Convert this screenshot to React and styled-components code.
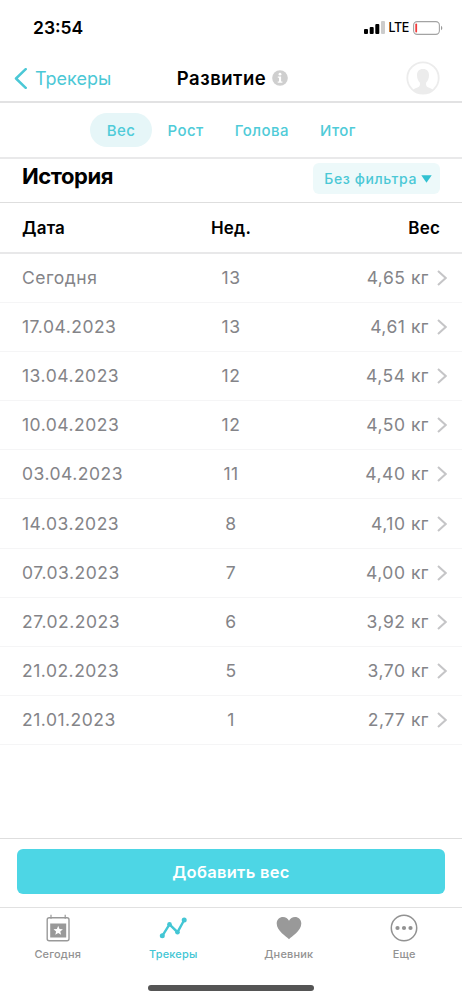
import styled, { createGlobalStyle } from 'styled-components';

const GlobalStyle = createGlobalStyle`
  * {
    box-sizing: border-box;
  }

  body {
    margin: 0;
    background: #fff;
    font-family: Inter, 'Liberation Sans', sans-serif;
  }

  button {
    font-family: inherit;
    border: none;
    background: none;
    padding: 0;
    cursor: pointer;
  }
`;

const Screen = styled.div`
  display: flex;
  flex-direction: column;
  width: 462px;
  height: 1000px;
  overflow: hidden;
  background: #fff;
`;

const StatusBar = styled.div`
  display: flex;
  align-items: center;
  justify-content: space-between;
  height: 54px;
  padding: 1px 19px 0 33px;
`;

const Clock = styled.span`
  font-size: 17.5px;
  font-weight: 600;
`;

const StatusIcons = styled.div`
  display: flex;
  align-items: center;
  gap: 4px;
`;

const Network = styled.span`
  font-size: 12.5px;
  font-weight: 500;
  letter-spacing: -0.4px;
`;

const NavBar = styled.header`
  display: grid;
  grid-template-columns: 1fr auto 1fr;
  align-items: center;
  height: 49px;
  padding: 1px 22px 0 14px;
  border-bottom: 2px solid #e2e2e3;
`;

const BackButton = styled.button`
  display: flex;
  align-items: center;
  gap: 8px;
  color: #4bc8d6;
  font-size: 18px;
  letter-spacing: 0;
`;

const Title = styled.h1`
  display: flex;
  align-items: center;
  gap: 6px;
  margin: 0;
  padding-left: 11px;
  font-size: 18.5px;
  font-weight: 600;
  letter-spacing: 0.5px;
`;

const Avatar = styled.div`
  justify-self: end;
  height: 34px;
`;

const Tabs = styled.nav`
  display: flex;
  align-items: center;
  height: 56px;
  padding-left: 90px;
  border-bottom: 2px solid #e9e9ea;
`;

const Tab = styled.button`
  min-width: 62px;
  height: 34px;
  padding: 0 15.5px;
  border-radius: 17px;
  background: ${({ $active }) => ($active ? '#e6f6f8' : 'transparent')};
  color: #4fcbd8;
  font-size: 15px;
  font-weight: 500;
  letter-spacing: 0.45px;
`;

const HistoryBar = styled.section`
  display: flex;
  justify-content: space-between;
  height: 44px;
  padding: 4px 22px 0;
  border-bottom: 1px solid #dedede;
`;

const Heading = styled.h2`
  margin: 0;
  font-size: 22px;
  line-height: 27px;
  font-weight: 700;
  letter-spacing: -0.45px;
`;

const FilterButton = styled.button`
  display: flex;
  align-items: center;
  gap: 4px;
  height: 31px;
  padding: 0 8px 0 11px;
  border-radius: 6px;
  background: #edf9fa;
  color: #4bc8d6;
  font-size: 14px;
  font-weight: 500;
  letter-spacing: 0.6px;
`;

const Row = styled.div`
  display: grid;
  grid-template-columns: 179px 60px 1fr;
  align-items: center;
  height: 49.1px;
  padding: 0 15px 1px 22px;
  border-bottom: 1px solid #f5f5f6;
  color: #848488;
  font-size: 17.5px;
  letter-spacing: 0.5px;
`;

const HeadRow = styled(Row)`
  height: 51px;
  padding-right: 22px;
  padding-bottom: 0;
  border-bottom: 2px solid #e8e8e9;
  color: #000;
  font-size: 17px;
  font-weight: 600;
  letter-spacing: 0.2px;
`;

const Week = styled.span`
  text-align: center;
`;

const Weight = styled.span`
  display: flex;
  align-items: center;
  justify-content: flex-end;
  gap: 8px;

  svg {
    margin-top: 1px;
  }
`;

const Footer = styled.footer`
  margin-top: auto;
  height: 162px;
  border-top: 1px solid #dedede;
`;

const AddArea = styled.div`
  height: 69px;
  padding: 10px 17px 0;
  border-bottom: 1px solid #e1e1e1;
`;

const AddButton = styled.button`
  width: 100%;
  height: 45px;
  border-radius: 6px;
  background: #4dd6e5;
  color: #fff;
  font-size: 16.5px;
  font-weight: 600;
  letter-spacing: 0.3px;
`;

const BottomNav = styled.nav`
  display: grid;
  grid-template-columns: repeat(4, 1fr);
  height: 78px;
  padding-top: 6px;
`;

const BottomItem = styled.button`
  display: flex;
  flex-direction: column;
  align-items: center;
  gap: 5px;
  height: 50px;
  color: ${({ $active }) => ($active ? '#43c6d4' : '#929292')};
  font-size: 11px;
  font-weight: 500;
  letter-spacing: 0.15px;
`;

const HomeIndicator = styled.div`
  width: 166px;
  height: 6px;
  margin: -1px auto 0;
  border-radius: 3px;
  background: #555;
`;

const SignalIcon = () => (
  <svg width="21" height="13" viewBox="0 0 21 13">
    <rect x="0" y="8" width="4" height="5" rx="1" fill="#000" />
    <rect x="5.7" y="6" width="4" height="7" rx="1" fill="#000" />
    <rect x="11.3" y="3" width="4" height="10" rx="1" fill="#000" />
    <rect x="17" y="0" width="4" height="13" rx="1" fill="#ccc" />
  </svg>
);

const BatteryIcon = () => (
  <svg width="30" height="14" viewBox="0 0 30 14">
    <rect x="0.6" y="0.6" width="25.8" height="12.8" rx="3.6" fill="none" stroke="#a3a3a3" strokeWidth="1.1" />
    <rect x="2.3" y="2.5" width="1.8" height="9" rx="0.9" fill="#f23b3b" />
    <path d="M28 4.8c1.8.8 1.8 3.6 0 4.4z" fill="#999" />
  </svg>
);

const BackIcon = () => (
  <svg width="13" height="21" viewBox="0 0 13 21" fill="none" stroke="currentColor" strokeWidth="2.5">
    <path d="M11.7 1.2 2 10.5l9.7 9.3" strokeLinecap="round" strokeLinejoin="round" />
  </svg>
);

const InfoIcon = () => (
  <svg width="16" height="16" viewBox="0 0 16 16">
    <circle cx="8" cy="8" r="7.8" fill="#cfcfcf" />
    <circle cx="8" cy="4.2" r="1.4" fill="#fff" />
    <path d="M5.8 6.5h3.3v5h1.3v1.2H5.7v-1.2H7V7.7H5.8z" fill="#fff" />
  </svg>
);

const AvatarIcon = () => (
  <svg width="34" height="34" viewBox="0 0 34 34">
    <circle cx="17" cy="17" r="15.7" fill="#fff" stroke="#ececec" strokeWidth="1.8" />
    <path
      d="M17 8c-4.2 0-6 2.7-6 6.2 0 3.2 1.2 5.8 2.8 7.3.5 2.6.1 4-2.3 5.1-1.7.8-3.5 1.2-4.6 2.4A15.5 15.5 0 0 0 17 32.6 15.5 15.5 0 0 0 27.1 29c-1.1-1.2-2.9-1.6-4.6-2.4-2.4-1.1-2.8-2.5-2.3-5.1 1.6-1.5 2.8-4.1 2.8-7.3C23 10.7 21.2 8 17 8z"
      fill="#ececec"
    />
  </svg>
);

const CaretIcon = () => (
  <svg width="11" height="8" viewBox="0 0 11 8">
    <path d="M.3.3h10.4L5.5 7.7z" fill="#31c1d1" />
  </svg>
);

const ChevronIcon = () => (
  <svg width="10" height="16" viewBox="0 0 10 16" fill="none" stroke="#c5c5c7" strokeWidth="2">
    <path d="M1 1l7.7 7L1 15" />
  </svg>
);

const CalendarIcon = () => (
  <svg width="28" height="28" viewBox="0 0 28 28">
    <path d="M7 .8v4M21.2.8v4" stroke="#999" strokeWidth="1.2" />
    <rect x="3.2" y="3.7" width="21.8" height="23" rx="2" fill="none" stroke="#999" strokeWidth="1.4" />
    <rect x="6.2" y="9.5" width="16" height="14" fill="#999" />
    <path d="M14.2 11.8l1.3 3.2 3.4.2-2.6 2.2.8 3.3-2.9-1.8-2.9 1.8.8-3.3-2.6-2.2 3.4-.2z" fill="#fff" />
  </svg>
);

const TrackersIcon = () => (
  <svg width="28" height="28" viewBox="0 0 28 28">
    <path d="M3.3 21.8 10.5 10.3l8 7.9L25.2 6" fill="none" stroke="#43c6d4" strokeWidth="2.4" />
    <g fill="#43c6d4">
      <circle cx="3.3" cy="21.8" r="2.5" />
      <circle cx="10.5" cy="10.3" r="2.3" />
      <circle cx="18.5" cy="18.2" r="2.3" />
      <circle cx="25.2" cy="6" r="2.5" />
    </g>
  </svg>
);

const HeartIcon = () => (
  <svg width="28" height="28" viewBox="0 0 28 28">
    <path
      d="M14 25.2C11.6 22.6 1.7 17 1.7 9.5 1.7 5.6 4.6 3 8 3c2.6 0 4.9 1.5 6 3.8C15.1 4.5 17.4 3 20 3c3.4 0 6.3 2.6 6.3 6.5C26.3 17 16.4 22.6 14 25.2z"
      fill="#999"
    />
  </svg>
);

const MoreIcon = () => (
  <svg width="28" height="28" viewBox="0 0 28 28">
    <circle cx="14" cy="14" r="12.7" fill="none" stroke="#929292" strokeWidth="1.5" />
    <g fill="#929292">
      <circle cx="7.5" cy="14" r="2.1" />
      <circle cx="14" cy="14" r="2.1" />
      <circle cx="20.5" cy="14" r="2.1" />
    </g>
  </svg>
);

const tabs = ['Вес', 'Рост', 'Голова', 'Итог'];

const history = [
  { date: 'Сегодня', week: 13, weight: '4,65' },
  { date: '17.04.2023', week: 13, weight: '4,61' },
  { date: '13.04.2023', week: 12, weight: '4,54' },
  { date: '10.04.2023', week: 12, weight: '4,50' },
  { date: '03.04.2023', week: 11, weight: '4,40' },
  { date: '14.03.2023', week: 8, weight: '4,10' },
  { date: '07.03.2023', week: 7, weight: '4,00' },
  { date: '27.02.2023', week: 6, weight: '3,92' },
  { date: '21.02.2023', week: 5, weight: '3,70' },
  { date: '21.01.2023', week: 1, weight: '2,77' },
];

const bottomItems = [
  { label: 'Сегодня', Icon: CalendarIcon },
  { label: 'Трекеры', Icon: TrackersIcon },
  { label: 'Дневник', Icon: HeartIcon },
  { label: 'Еще', Icon: MoreIcon },
];

const App = () => {
  return (
    <Screen>
      <GlobalStyle />
      <StatusBar>
        <Clock>23:54</Clock>
        <StatusIcons>
          <SignalIcon />
          <Network>LTE</Network>
          <BatteryIcon />
        </StatusIcons>
      </StatusBar>

      <NavBar>
        <BackButton>
          <BackIcon />
          Трекеры
        </BackButton>
        <Title>
          Развитие
          <InfoIcon />
        </Title>
        <Avatar>
          <AvatarIcon />
        </Avatar>
      </NavBar>

      <Tabs>
        {tabs.map((tab) => (
          <Tab key={tab} $active={tab === 'Вес'}>
            {tab}
          </Tab>
        ))}
      </Tabs>

      <HistoryBar>
        <Heading>История</Heading>
        <FilterButton>
          Без фильтра
          <CaretIcon />
        </FilterButton>
      </HistoryBar>

      <HeadRow>
        <span>Дата</span>
        <Week>Нед.</Week>
        <Weight>Вес</Weight>
      </HeadRow>
      {history.map(({ date, week, weight }) => (
        <Row key={date}>
          <span>{date}</span>
          <Week>{week}</Week>
          <Weight>
            {weight} кг
            <ChevronIcon />
          </Weight>
        </Row>
      ))}

      <Footer>
        <AddArea>
          <AddButton>Добавить вес</AddButton>
        </AddArea>
        <BottomNav>
          {bottomItems.map(({ label, Icon }) => (
            <BottomItem key={label} $active={label === 'Трекеры'}>
              <Icon />
              {label}
            </BottomItem>
          ))}
        </BottomNav>
        <HomeIndicator />
      </Footer>
    </Screen>
  );
};

export default App;
